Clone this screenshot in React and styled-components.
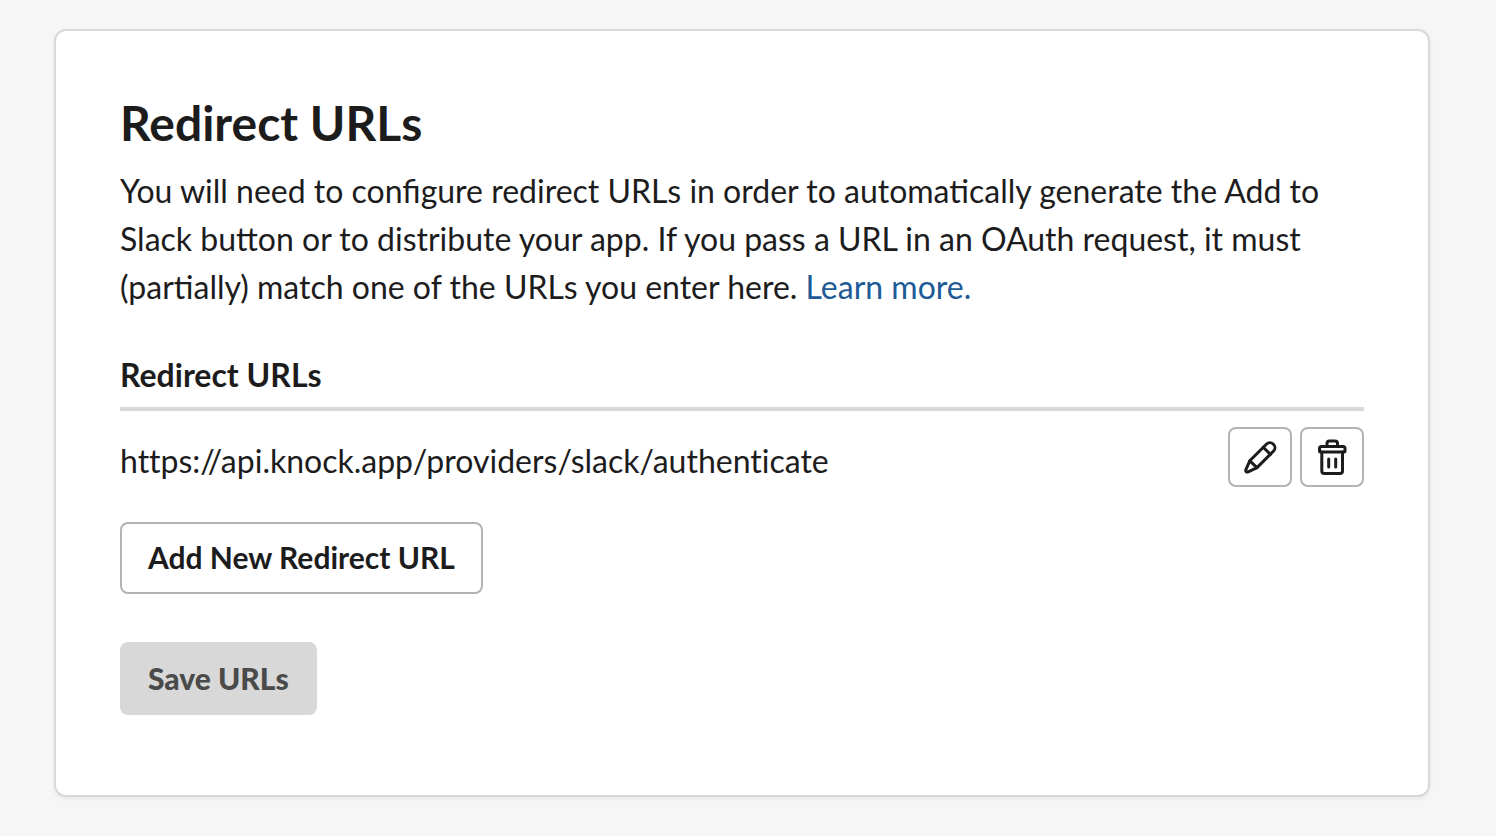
import React from "react";
import styled, { createGlobalStyle } from "styled-components";

const GlobalStyle = createGlobalStyle`
    * {box-sizing:border-box}
    body {
        margin:0; background:#f6f6f6; color:#1d1c1d;
        font-family:Lato, "Open Sans", sans-serif; font-size:32px; line-height:48px;
    }
`;

const Page = styled.main`
    padding:29px 66px 39px 54px;
`;

const Card = styled.section`
    padding:64px 64px 80px; border:2px solid #d8d8d8; border-radius:12px;
    background:#fff;
    box-shadow:0 2px 4px rgba(0, 0, 0, 0.06);
`;

const Title = styled.h1`
    margin:0 0 16px; font-size:48px; font-weight:700; line-height:56px;
`;

const Description = styled.p`
    margin:0 0 40px;
`;

const Link = styled.a`
    color:#1d5a96; text-decoration:none;
    &:hover {text-decoration:underline}
`;

const Table = styled.table`
    width:100%; margin-bottom:35px; border-collapse:collapse;
`;

const HeadCell = styled.th`
    padding:0 0 8px; border-bottom:4px solid #d8d8d8;
    font-weight:700; text-align:left;
`;

const UrlCell = styled.td`
    padding:16px 0 2px; vertical-align:bottom;
    font-variant-ligatures:none;
`;

const ActionCell = styled.td`
    padding:16px 0 0;
`;

const Actions = styled.div`
    display:flex; justify-content:flex-end; gap:8px;
`;

const IconButton = styled.button`
    display:flex; align-items:center; justify-content:center;
    width:64px; height:60px; padding:0;
    border:2px solid #b3b3b3; border-radius:8px;
    background:#fff; color:#1d1c1d; cursor:pointer;
`;

const Icon = styled.svg`
    display:block; width:40px; height:40px;
    fill:none; stroke:currentColor; stroke-width:3;
    stroke-linecap:round; stroke-linejoin:round;
`;

const Button = styled.button`
    display:block; height:${props => props.$primary ? 73 : 72}px; padding:0 26px 2px;
    border:2px solid ${props => props.$primary ? "#d8d8d8" : "#b3b3b3"};
    border-radius:8px;
    background:${props => props.$primary ? "#d8d8d8" : "#fff"};
    color:${props => props.$primary ? "#4a4a4a" : "#1d1c1d"};
    font-family:inherit; font-size:30px; line-height:48px;
    font-weight:${props => props.$primary ? 900 : 700};
    cursor:${props => props.disabled ? "default" : "pointer"};
`;

const Buttons = styled.div`
    display:flex; flex-direction:column; align-items:flex-start; gap:48px;
`;

const PencilIcon = () => (
    <Icon viewBox="0 0 40 40" aria-hidden="true">
        <path d="M9.8 23.8 26.6 7a4.6 4.6 0 0 1 6.5 0l.5.5a4.6 4.6 0 0 1 0 6.5L17 30.6 8.2 34.8c-1.6.7-2.9-.6-2.3-2.2z" />
        <path d="m23.2 10.2 7.2 7.2M9.8 23.8l7.2 6.8" />
    </Icon>
);

const TrashIcon = () => (
    <Icon viewBox="0 0 40 40" aria-hidden="true">
        <path d="M15 9.5v-3A2.5 2.5 0 0 1 17.5 4h5.5a2.5 2.5 0 0 1 2.5 2.5v3" />
        <path d="M9.5 9.5h21.5a2 2 0 0 1 2 2V14a1 1 0 0 1-1 1H8.5a1 1 0 0 1-1-1v-2.500a2 2 0 0 1 2-2z" />
        <path d="M9.8 15v19a2.500 2.500 0 0 0 2.500 2.500h15.700a2.500 2.500 0 0 0 2.500-2.500V15M16.700 22v8M23.700 22v8" />
    </Icon>
);

const urls = ["https://api.knock.app/providers/slack/authenticate"];

const App = () => (
    <>
        <GlobalStyle />
        <Page>
            <Card>
                <Title>Redirect URLs</Title>
                <Description>
                    You will need to configure redirect URLs in order to automatically generate the Add to Slack button or to distribute your app. If you pass a URL in an OAuth request, it must (partially) match one of the URLs you enter here. <Link href="#learn-more">Learn more.</Link>
                </Description>
                <Table>
                    <thead>
                        <tr>
                            <HeadCell colSpan={2} scope="col">Redirect URLs</HeadCell>
                        </tr>
                    </thead>
                    <tbody>
                        {urls.map(url => (
                            <tr key={url}>
                                <UrlCell>{url}</UrlCell>
                                <ActionCell>
                                    <Actions>
                                        <IconButton type="button" aria-label="Edit URL"><PencilIcon /></IconButton>
                                        <IconButton type="button" aria-label="Delete URL"><TrashIcon /></IconButton>
                                    </Actions>
                                </ActionCell>
                            </tr>
                        ))}
                    </tbody>
                </Table>
                <Buttons>
                    <Button type="button">Add New Redirect URL</Button>
                    <Button type="button" $primary disabled>Save URLs</Button>
                </Buttons>
            </Card>
        </Page>
    </>
);

export default App;
